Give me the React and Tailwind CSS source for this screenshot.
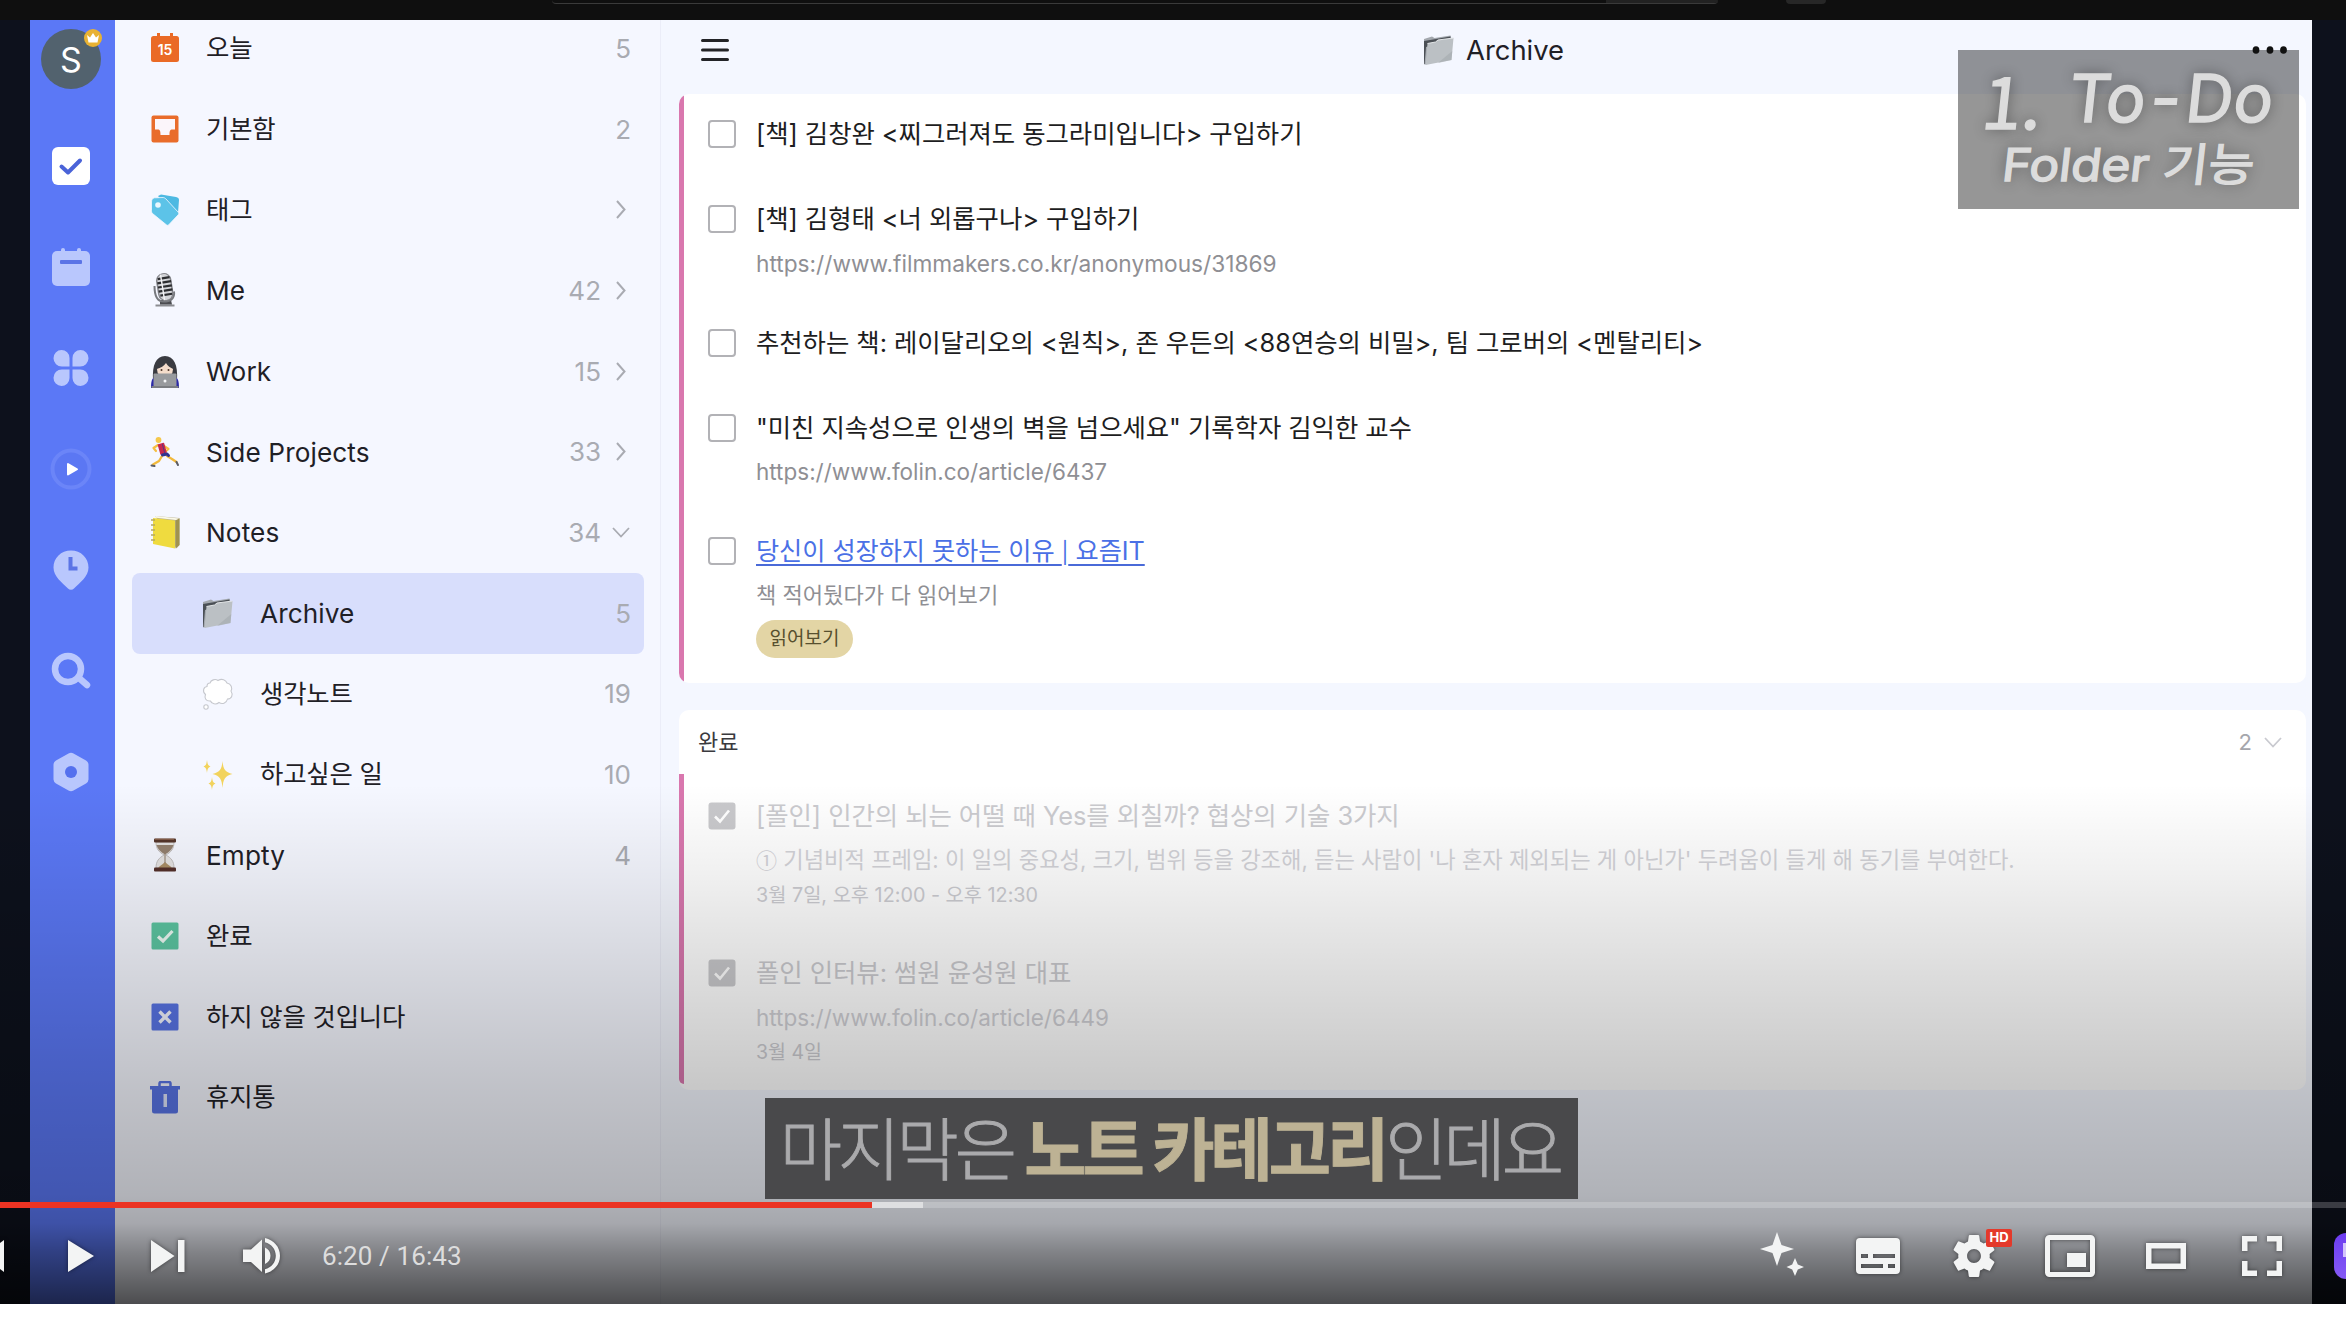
import React from "react";

const KR = "font-[Inter,'Noto_Sans_CJK_KR',sans-serif]";

/* ---------- rail icons ---------- */
const railIcons = [
  <svg key="c" width="38" height="38" viewBox="0 0 38 38"><rect width="38" height="38" rx="6" fill="#fff" /><path d="M9.500 19.500l6.500 6 12-12" fill="none" stroke="#4a63d8" strokeWidth="4" strokeLinecap="round" strokeLinejoin="round" /></svg>,
  <svg key="d" width="38" height="38" viewBox="0 0 38 38"><rect y="3" width="38" height="35" rx="5" fill="#b9c7fd" /><rect x="9" y="0" width="4" height="8" rx="2" fill="#b9c7fd" /><rect x="25" y="0" width="4" height="8" rx="2" fill="#b9c7fd" /><rect x="8" y="12" width="22" height="4" rx="1" fill="#5b74e6" /></svg>,
  <svg key="e" width="38" height="38" viewBox="0 0 38 38" fill="#b9c7fd"><path d="M17.500 17.500H10a8.300 8.300 0 0 1-8.500-8.300A8 8 0 0 1 9.500 1a8 8 0 0 1 8 8zM20.500 17.500h7.500a8.300 8.300 0 0 0 8.500-8.300A8 8 0 0 0 28.500 1a8 8 0 0 0-8 8zM17.500 20.500H10a8.300 8.300 0 0 0-8.500 8.300 8 8 0 0 0 8 8.200 8 8 0 0 0 8-8zM20.500 20.500h7.500a8.300 8.300 0 0 1 8.500 8.300 8 8 0 0 1-8 8.200 8 8 0 0 1-8-8z" /></svg>,
  <svg key="f" width="42" height="42" viewBox="0 0 42 42"><circle cx="21" cy="21" r="18.500" fill="#5b77f3" stroke="#6b85f8" strokeWidth="4" /><path d="M18 16v10.500l9-5.250z" fill="#fff" stroke="#fff" strokeWidth="2" strokeLinejoin="round" /></svg>,
  <svg key="g" width="38" height="40" viewBox="0 0 38 40"><path d="M19 0.500C9 0.500 1.500 8 1.500 17.500c0 9 8.500 15 14.500 21a4 4 0 0 0 6 0c6-6 14.500-12 14.500-21C36.500 8 29 .5 19 .5z" fill="#b9c7fd" /><path d="M18.500 7v11.500h7" fill="none" stroke="#5b74e6" strokeWidth="4" /></svg>,
  <svg key="h" width="40" height="38" viewBox="0 0 40 38" fill="none" stroke="#b9c7fd"><circle cx="17" cy="17" r="13" strokeWidth="6.500" /><path d="M28 26l8 7" strokeWidth="6.500" strokeLinecap="round" /></svg>,
  <svg key="i" width="38" height="40" viewBox="0 0 38 40"><path d="M16.500 1.500a5 5 0 0 1 5 0L34 8.500a5 5 0 0 1 2.500 4v15a5 5 0 0 1-2.500 4l-12.500 7a5 5 0 0 1-5 0L4 31.500a5 5 0 0 1-2.500-4v-15a5 5 0 0 1 2.500-4z" fill="#b9c7fd" /><circle cx="19" cy="20" r="6" fill="#5470ee" /></svg>,
];

/* ---------- list icons ---------- */
const Today = () => (
  <svg width="30" height="30" viewBox="0 0 30 30"><rect x="1" y="3" width="28" height="26" rx="2.500" fill="#ea6a26" /><rect x="7" y="0" width="3" height="5" fill="#ea6a26" /><rect x="20" y="0" width="3" height="5" fill="#ea6a26" /><text x="15" y="21.500" textAnchor="middle" fontSize="14" fontWeight="600" fill="#fff" className="font-[Inter,sans-serif]">15</text></svg>
);
const Inbox = () => (
  <svg width="28" height="28" viewBox="0 0 28 28"><rect x=".5" y=".5" width="27" height="27" rx="2" fill="#e96c2b" /><path d="M4 4h20v10.500h-3.500c-1.500.5-2 1.500-2 5.500h-9c0-4-.5-5-2-5.500H4z" fill="#fbf5fa" /></svg>
);
const Tag = () => (
  <svg width="30" height="32" viewBox="0 0 30 32"><path d="M8 2l3-1.500 15 2.500c2 .3 3 1.500 3 3l-1 13-3 3z" fill="#4db9e2" /><path d="M1.500 8c0-2 1-4 3-4.200L13 3.500c1 0 2 .5 3 1.500l12 13c1 1 1 2 0 3l-9 9.500c-1 1.200-2 1-3 0L2.500 19.500c-1-1-1-2-1-3z" fill="#5cc3e8" stroke="#f5f8ff" strokeWidth=".8" /><circle cx="8" cy="11" r="2.800" fill="#e9f8ff" /></svg>
);
const Mic = () => (
  <svg width="26" height="34" viewBox="0 0 26 34"><path d="M3.500 31.500h19v2h-19z" fill="#8b8c91" /><path d="M8 27h11l1 4.500H8z" fill="#4b4c50" /><path d="M2.500 13c0 10 3 15.500 9 15.500 7 0 11.500-3 10.500-10" fill="none" stroke="#77797e" strokeWidth="2" /><g transform="rotate(-9 13 14)"><rect x="5" y="0" width="15.500" height="28" rx="7.500" fill="#85868b" /><rect x="6.500" y="1" width="12.500" height="26" rx="6" fill="#d3d4d8" /><path d="M7 5h12M6 9.200h14M6 13.400h14M6 17.600h14M7 21.800h12" stroke="#2c2d30" strokeWidth="2.200" /><path d="M10.500 1v26" stroke="#f4f4f6" strokeWidth="1.400" /></g></svg>
);
const Woman = () => (
  <svg width="30" height="33" viewBox="0 0 30 33"><path d="M3 25C2 10 6 1 15 1s13 9 12 24z" fill="#3a3b41" /><path d="M1 33c0-7 1-10 4-11h20c3 1 4 4 4 11z" fill="#2c2aa6" /><ellipse cx="15" cy="14.500" rx="8" ry="8" fill="#f4dccb" /><path d="M6.500 14c.5-7 5-9 9-10 4 2 7.500 5 8 10-3-1-6-3-7.500-6-2 3-5 5-9.500 6z" fill="#3a3b41" /><circle cx="11.500" cy="15" r="1" fill="#4a3328" /><circle cx="18.500" cy="15" r="1" fill="#4a3328" /><rect x="3.500" y="18.500" width="23" height="13" rx="1" fill="#989a9e" /><rect x="1.500" y="31" width="27" height="2" fill="#7b7d82" /><circle cx="15" cy="26" r="1.500" fill="#f4f5f7" /></svg>
);
const Runner = () => (
  <svg width="30" height="32" viewBox="0 0 30 32" fill="none" strokeLinecap="round" strokeLinejoin="round"><path d="M8 9l-4.500 3L6 15M14 10l4.500 3-3 2.500" stroke="#f6bf42" strokeWidth="2.200" /><path d="M12 20l-3 5-6 3.500M17 20l5 3 4.500 3" stroke="#f2b93c" strokeWidth="2.300" /><path d="M1.500 29.500l3 .5M26.500 26l1.500 3" stroke="#5b5d66" strokeWidth="2" /><path d="M8.500 9l5-1.500 2.500 9-5 1.500z" fill="#c8284f" stroke="#c8284f" strokeWidth="1.500" /><path d="M12.500 8.500l2 8" stroke="#553a7f" strokeWidth="1" /><path d="M12.500 19l4.500-1 1.500 1.500" stroke="#2f3490" strokeWidth="3" /><circle cx="8.500" cy="4" r="2.900" fill="#f5c84c" /></svg>
);
const Notebook = () => (
  <svg width="30" height="34" viewBox="0 0 30 34"><path d="M5 1L29.500 3v27l-3 3.500z" fill="#b9b294" /><path d="M3 3L25 5.500v28L3 29z" fill="#efdb3f" /><path d="M25.500 5.500v28l4-3.500V3.500z" fill="#a0934f" /><path d="M4 2.500L26 5l3-1.500L6 1z" fill="#fbf9e8" /><path d="M1 5h4M1 10h4M1 15h4M1 20h4M1 25h4" stroke="#b3a867" strokeWidth="1.700" /></svg>
);
const Folder = () => (
  <svg width="32" height="31" viewBox="0 0 32 31"><path d="M1 4l8-2.500 2.500 1.500L27.500.5l.8 3L3 29.500 1 29z" fill="#a3a8ae" /><path d="M1 6l9-1.500L27.500 1.500v4L3 12 1.500 29.500 1 29z" fill="#4b5056" /><path d="M4.500 8.500l8-1.500 2.500-2 15.500-2-2 22L2.500 30z" fill="#bbc0c4" /><path d="M4.500 8.500l8-1.500 2.500-2 15.500-2" fill="none" stroke="#e3e6e8" strokeWidth="1" /><path d="M15 28l13.500-3 .8-9z" fill="#a0a6aa" opacity=".5" /></svg>
);
const Thought = () => (
  <svg width="32" height="34" viewBox="0 0 32 34"><g fill="#fff" stroke="#c6c8ce" strokeWidth="1.100"><path d="M8 6c1-3 5-4.500 8-2.500 4-2.500 8-.5 9 2.500 4.500 1 5.500 5 4 8 2.500 4 .5 8-3.500 8-1 4.500-5.500 5.500-8.500 3.500-3 2.500-7.500 1.500-8.500-1.500-4.500.5-6.500-3-5-6.500-3.500-3-2-7.500 1.500-8 0-2 1-3.500 3-3.500z" /><circle cx="4" cy="30" r="2.200" /></g></svg>
);
const Sparkle = () => (
  <svg width="30" height="32" viewBox="0 0 30 32" fill="#f2d35d"><path d="M19.500 2c.8 8 2.200 11 10 13-7.800 2-9.200 5-10 14-.8-9-2.200-12-10-14 7.800-2 9.200-5 10-13z" /><path d="M4 1c.5 4 1 5.500 3.500 6.500C5 8.500 4.500 10 4 14c-.5-4-1-5.500-3.500-6.500C3 6.500 3.500 5 4 1zM9 18c.5 4 1 5.500 3.500 6.500C10 25.500 9.500 27 9 31c-.5-4-1-5.500-3.500-6.500C8 23.500 8.500 22 9 18z" /></svg>
);
const Hourglass = () => (
  <svg width="24" height="34" viewBox="0 0 24 34"><path d="M3 4h18c0 7-3 10-8 13 5 3 8 6 8 13H3c0-7 3-10 8-13C6 14 3 11 3 4z" fill="#e4e2e2" stroke="#b5b1b0" strokeWidth=".8" /><path d="M3.500 7h17c-1 4-4 7-8.500 9.500C7.500 14 4.500 11 3.500 7z" fill="#93806f" /><path d="M5 30.500c1-2.500 4-3.500 7-6.500 3 3 6 4 7 6.500z" fill="#a98e66" /><path d="M12 16v9" stroke="#8c7a68" strokeWidth="1" /><rect x="1" y=".5" width="22" height="4" rx="1" fill="#54352a" /><rect x="1" y="29.500" width="22" height="4" rx="1" fill="#54302a" /><path d="M2 1.200h19" stroke="#a8795f" strokeWidth=".8" /></svg>
);
const Done = () => (
  <svg width="28" height="28" viewBox="0 0 28 28"><rect x=".5" y=".5" width="27" height="27" rx="1.500" fill="#5cc6a2" /><path d="M7 14.500l5 4.500 9.500-10" fill="none" stroke="#edfbf5" strokeWidth="3.200" /></svg>
);
const Wont = () => (
  <svg width="28" height="28" viewBox="0 0 28 28"><rect x=".5" y=".5" width="27" height="27" rx="1.500" fill="#5874e6" /><path d="M8.500 8.500l11 11M19.500 8.500l-11 11" fill="none" stroke="#f3f6ff" strokeWidth="3.400" /></svg>
);
const Trash = () => (
  <svg width="30" height="33" viewBox="0 0 30 33"><path d="M9.500 6V2.500a1.500 1.500 0 0 1 1.500-1.500h8a1.500 1.500 0 0 1 1.500 1.500V6" fill="none" stroke="#5874e6" strokeWidth="2.500" /><rect x="0" y="5" width="30" height="3.500" fill="#5874e6" /><path d="M2 7h26v23a2.500 2.500 0 0 1-2.500 2.500h-21A2.500 2.500 0 0 1 2 30z" fill="#5874e6" /><rect x="13.500" y="13" width="3.500" height="13" fill="#dfe5fb" /></svg>
);

const ChevR = () => (
  <svg width="10" height="19" viewBox="0 0 10 19" fill="none" stroke="#a9abb2" strokeWidth="2"><path d="M1 1l7.500 8.500L1 18" /></svg>
);
const ChevD = ({ c = "#a9abb2" }) => (
  <svg width="18" height="11" viewBox="0 0 18 11" fill="none" stroke={c} strokeWidth="1.800"><path d="M1 1l8 8.500L17 1" /></svg>
);

const rows = [
  { icon: <Today />, label: "오늘", n: "5" },
  { icon: <Inbox />, label: "기본함", n: "2" },
  { icon: <Tag />, label: "태그", chev: "r" },
  { icon: <Mic />, label: "Me", n: "42", chev: "r", latin: true },
  { icon: <Woman />, label: "Work", n: "15", chev: "r", latin: true },
  { icon: <Runner />, label: "Side Projects", n: "33", chev: "r", latin: true },
  { icon: <Notebook />, label: "Notes", n: "34", chev: "d", latin: true },
  { icon: <Folder />, label: "Archive", n: "5", sub: true, active: true, latin: true },
  { icon: <Thought />, label: "생각노트", n: "19", sub: true },
  { icon: <Sparkle />, label: "하고싶은 일", n: "10", sub: true },
  { icon: <Hourglass />, label: "Empty", n: "4", latin: true },
  { icon: <Done />, label: "완료" },
  { icon: <Wont />, label: "하지 않을 것입니다" },
  { icon: <Trash />, label: "휴지통" },
];

function Row({ icon, label, n, chev, sub, active, latin }) {
  return (
    <div className={`flex h-[80.7px] items-center rounded-lg pr-[13px] ${sub ? "pl-[70px]" : "pl-[17px]"} ${active ? "bg-[#d8defc]" : ""}`}>
      <div className="flex w-8 shrink-0 justify-center">{icon}</div>
      <div className={`${sub ? "ml-[26px]" : "ml-[25px]"} flex-1 whitespace-nowrap text-[#1f2026] ${latin ? "pt-px text-[26.200px] tracking-[0.1px]" : "text-[25.400px] tracking-[-0.2px]"}`}>{label}</div>
      <div className="text-[26px] text-[#a9abb2]">{n}</div>
      {chev && <div className="ml-[10px] flex w-5 justify-center">{chev === "r" ? <ChevR /> : <ChevD />}</div>}
    </div>
  );
}

function Box({ done }) {
  return done ? (
    <svg width="28" height="28" viewBox="0 0 28 28" className="shrink-0"><rect x=".5" y=".5" width="27" height="27" rx="3" fill="#c9c9cc" /><path d="M7 14.500l5 5 9-11" fill="none" stroke="#fff" strokeWidth="2.600" /></svg>
  ) : (
    <div className="size-7 shrink-0 rounded border-2 border-[#b2b2b6]" />
  );
}

function Task({ done, title, h, children }) {
  return (
    <div className={`flex ${h}`}>
      <div className="flex h-10 items-center"><Box done={done} /></div>
      <div className="ml-[20px] whitespace-nowrap">
        <div className={`h-10 text-[25.400px] leading-10 tracking-[-0.05px] ${done ? "text-[#cbcbcf]" : "text-[#1d1d21]"}`}>{title}</div>
        {children}
      </div>
    </div>
  );
}

const ctl = "drop-shadow-[0_0_2px_rgba(0,0,0,0.5)]";

export default function App() {
  return (
    <div className={`flex h-[1330px] w-[2346px] flex-col overflow-hidden bg-white ${KR}`}>
      <div className="flex h-5 shrink-0 items-start bg-[#0f0f0f] pl-[552px]">
        <div className="flex h-[4px] w-[1166px] overflow-hidden rounded-b-[10px] border-b border-[#3a3a3a]">
          <div className="ml-auto w-[112px] bg-[#222]" />
        </div>
        <div className="ml-[68px] h-1 w-[40px] rounded-b-full bg-[#272727]" />
      </div>

      <div className="relative flex h-[1284px] shrink-0 overflow-hidden bg-[#0d111c]">
        <div className="w-[30px] shrink-0" />
        {/* rail */}
        <div className="flex w-[85px] shrink-0 flex-col items-center bg-[#5b78f6] pr-[3px] pt-[9px]">
          <div className="relative flex size-[60px] shrink-0 items-center justify-center rounded-full bg-[#52626e] text-[34px] text-white">
            S
            <span className="absolute -right-px top-0 flex size-[18px] items-center justify-center rounded-full bg-[#e9b233]">
              <svg width="12" height="10" viewBox="0 0 12 10" fill="#fff"><path d="M0 2l3 2.500L6 0l3 4.500L12 2l-1.500 7.500h-9z" /></svg>
            </span>
          </div>
          <div className="mt-[26px] flex flex-col">
            {railIcons.map((ic, i) => (
              <div key={i} className="flex h-[101px] items-center justify-center">{ic}</div>
            ))}
          </div>
        </div>
        {/* list sidebar */}
        <div className="w-[546px] shrink-0 border-r border-[#ebedf8] bg-[#f5f7ff] pl-[17px] pr-[16px]">
          <div className="-mt-[12px]">
            {rows.map((r) => <Row key={r.label} {...r} />)}
          </div>
        </div>
        {/* content */}
        <div className="flex flex-1 flex-col bg-[#f4f7ff] pl-[18px] pr-[6px]">
          <div className="flex h-[74px] shrink-0 items-center pb-[13px]">
            <svg width="28" height="24" viewBox="0 0 28 24" stroke="#222327" strokeWidth="3" strokeLinecap="round" className="-mt-px ml-[22px]"><path d="M1.500 2.500h25M1.500 12h25M1.500 21.500h25" /></svg>
            <div className="ml-[694px] flex items-center gap-[11px] pt-px text-[27.400px] text-[#1f2026]"><Folder />Archive</div>
          </div>
          <div className="flex h-[589px] shrink-0 overflow-hidden rounded-[10px] bg-white">
            <div className="w-[5px] bg-[#d977ae]" />
            <div className="flex flex-col pl-[24px] pt-[20px]">
              <Task h="h-[85px]" title="[책] 김창완 <찌그러져도 동그라미입니다> 구입하기" />
              <Task h="h-[124px]" title="[책] 김형태 <너 외롭구나> 구입하기">
                <div className="mt-[9px] text-[22.700px] leading-8 text-[#8f8f94]">https://www.filmmakers.co.kr/anonymous/31869</div>
              </Task>
              <Task h="h-[85px]" title="추천하는 책: 레이달리오의 <원칙>, 존 우든의 <88연승의 비밀>, 팀 그로버의 <멘탈리티>" />
              <Task h="h-[123px]" title={'"미친 지속성으로 인생의 벽을 넘으세요" 기록학자 김익한 교수'}>
                <div className="mt-[8px] text-[22.500px] leading-8 text-[#8f8f94]">https://www.folin.co/article/6437</div>
              </Task>
              <Task h="h-[130px]" title={<span className="text-[25.200px] text-[#4a70e6] underline decoration-[#4a6ad8] decoration-2 underline-offset-[4px]">당신이 성장하지 못하는 이유 <span className="text-[21px]">|</span> 요즘IT</span>}>
                <div className="mt-[8px] text-[22.100px] leading-8 text-[#8f8f94]">책 적어뒀다가 다 읽어보기</div>
                <div className="mt-[9px] flex h-[38px] w-[97px] items-center justify-center rounded-full bg-[#e3d5a5] pt-px text-[19px] text-[#57502f]">읽어보기</div>
              </Task>
            </div>
          </div>
          <div className="mt-[27px] flex h-[380px] shrink-0 flex-col overflow-hidden rounded-[10px] bg-white">
            <div className="flex h-[64px] shrink-0 items-center pl-[19px] pr-[24px] text-[22px] text-[#3a3a3e]">
              완료
              <span className="ml-auto mr-[12px] text-[#a5a6ac]">2</span>
              <ChevD c="#c9cad0" />
            </div>
            <div className="flex flex-1">
              <div className="mb-[6px] w-[5px] rounded-bl-[5px] bg-[#d977ae]" />
              <div className="flex flex-col pl-[24px] pt-[22px]">
                <Task done h="h-[157px]" title="[폴인] 인간의 뇌는 어떨 때 Yes를 외칠까? 협상의 기술 3가지">
                  <div className="mt-[8px] h-8 text-[22.200px] leading-[30px] text-[#d3d3d8]"><span className="font-['Noto_Sans_CJK_KR',sans-serif] text-[21px]">①</span> 기념비적 프레임: 이 일의 중요성, 크기, 범위 등을 강조해, 듣는 사람이 '나 혼자 제외되는 게 아닌가' 두려움이 들게 해 동기를 부여한다.</div>
                  <div className="mt-[3px] text-[19.800px] leading-8 text-[#cdcdd2]">3월 7일, 오후 12:00 - 오후 12:30</div>
                </Task>
                <Task done h="h-[120px]" title="폴인 인터뷰: 썸원 윤성원 대표">
                  <div className="mt-[9px] text-[22.500px] leading-8 text-[#d0d0d5]">https://www.folin.co/article/6449</div>
                  <div className="mt-[2px] text-[19.500px] leading-8 text-[#cdcdd2]">3월 4일</div>
                </Task>
              </div>
            </div>
          </div>
        </div>
        <div className="w-[34px] shrink-0" />

        {/* chapter caption */}
        <div className="absolute left-[1958px] top-[30px] flex h-[159px] w-[341px] flex-col items-center bg-black/41 font-['Noto_Sans_CJK_KR',sans-serif] text-[#dcdcdc] [text-shadow:0_0_14px_rgba(0,0,0,0.45)] [-webkit-text-stroke:1.5px_#dcdcdc]">
          <div className="mt-[10px] flex h-[76px] -skew-x-6 items-center whitespace-pre text-[66px] leading-[70px]">
            <span className="text-[72px]">1.</span>
            <span className="ml-[26px] font-[Inter,sans-serif]">To</span>
            <span className="mx-[5px] inline-block font-[Inter,sans-serif]">-</span>
            <span className="font-[Inter,sans-serif]">Do</span>
          </div>
          <div className="-mt-[3px] -skew-x-6 scale-x-110 whitespace-pre font-[Inter,'Noto_Sans_CJK_KR',sans-serif] text-[45px] leading-[64px]">Folder 기능</div>
        </div>
        <svg width="36" height="8" viewBox="0 0 36 8" className="absolute left-[2252px] top-[26px]" fill="#111"><ellipse cx="4" cy="4" rx="3.400" ry="3.800" /><ellipse cx="18" cy="4" rx="3.400" ry="3.800" /><ellipse cx="31.500" cy="4" rx="3.400" ry="3.800" /></svg>

        {/* bottom shade */}
        <div className="absolute inset-x-0 bottom-0 h-[520px] bg-[linear-gradient(180deg,rgba(0,0,0,0)_0%,rgba(0,0,0,0.055)_16%,rgba(0,0,0,0.12)_33%,rgba(0,0,0,0.215)_58%,rgba(0,0,0,0.28)_79%,rgba(0,0,0,0.32)_84.500%,rgba(0,0,0,0.47)_90%,rgba(0,0,0,0.69)_100%)]" />

        {/* subtitle */}
        <div className="absolute left-[765px] top-[1078px] flex h-[101px] w-[813px] items-center justify-center whitespace-pre bg-[#49494b] pb-[6px] pr-[3px] font-['Noto_Sans_CJK_KR',sans-serif] text-[67.700px] font-light tracking-[-4px] text-[#aaaaac] [-webkit-text-stroke:0.9px_currentColor]">
          마지막은<span className="font-bold text-[#bdb294]"> 노트 카테고리</span>인데요
        </div>

        {/* player bar */}
        <div className="absolute inset-x-0 bottom-0 h-[102px]">
          <div className="flex h-[6px] bg-white/20">
            <div className="w-[872px] bg-[#eb3323]" />
            <div className="w-[51px] bg-white/50" />
          </div>
          <div className="flex h-24 items-center text-[#f3f4f4]">
            <svg width="4" height="32" viewBox="0 0 4 32" fill="currentColor" className={ctl}><path d="M4 0v32L0 29V3z" /></svg>
            <svg width="26" height="32" viewBox="0 0 26 32" fill="currentColor" className={`ml-[64px] ${ctl}`}><path d="M0 0v32l26-16z" /></svg>
            <svg width="34" height="32" viewBox="0 0 34 32" fill="currentColor" className={`ml-[57px] ${ctl}`}><path d="M0 0v32l23.500-16zM27 0h6.500v32H27z" /></svg>
            <svg width="38" height="36" viewBox="0 0 38 36" fill="currentColor" className={`ml-[58px] ${ctl}`}><path d="M0 11.500v12.500h8l11 10V1.500l-11 10zM22 9.500v16.500c3.500-1.500 5.500-4.500 5.500-8.250s-2-6.750-5.500-8.250zM22 0v4.300c6.500 1.800 10.800 7 10.800 13.500S28.500 29.500 22 31.300v4.200c9-2 15-9 15-17.700S31 2 22 0z" /></svg>
            <div className="ml-[41px] font-[Roboto,sans-serif] text-[26px] tracking-[0.1px] text-[#dddddd]">6:20 / 16:43</div>
            <div className="ml-auto flex items-center">
              <svg width="44" height="44" viewBox="0 0 44 44" fill="currentColor" className="-mt-1"><path d="M17 0l4.500 13L34 17l-12.500 4L17 34l-4.500-13L0 17l12.500-4zM35 26l2.800 6.500L44 35l-6.200 2.500L35 44l-2.800-6.500L26.500 35l5.700-2.500z" /></svg>
              <svg width="44" height="36" viewBox="0 0 44 36" className={`ml-[52px] ${ctl}`}><path fillRule="evenodd" fill="currentColor" d="M4 0h36a4 4 0 0 1 4 4v28a4 4 0 0 1-4 4H4a4 4 0 0 1-4-4V4a4 4 0 0 1 4-4zM5 16v4h7v-4zM17 16v4h22v-4zM5 26v4h22v-4zM32 26v4h7v-4z" /></svg>
              <div className="relative ml-[53px]">
                <svg width="42" height="42" viewBox="2 2 20 20" fill="currentColor" className={ctl}><path d="M19.430 12.980c.04-.32.07-.64.07-.98s-.03-.66-.07-.98l2.110-1.650c.19-.15.24-.42.12-.64l-2-3.460c-.12-.22-.39-.3-.61-.22l-2.490 1c-.52-.4-1.080-.73-1.690-.98l-.38-2.650C14.460 2.180 14.250 2 14 2h-4c-.25 0-.46.18-.49.42l-.38 2.650c-.61.25-1.170.59-1.690.98l-2.490-1c-.23-.09-.49 0-.61.22l-2 3.460c-.13.22-.07.49.12.64l2.110 1.650c-.04.32-.07.65-.07.98s.03.66.07.98l-2.110 1.650c-.19.15-.24.42-.12.64l2 3.460c.12.22.39.3.61.22l2.490-1c.52.4 1.080.73 1.690.98l.38 2.650c.03.24.24.42.49.42h4c.25 0 .46-.18.49-.42l.38-2.650c.61-.25 1.170-.59 1.690-.98l2.490 1c.23.09.49 0 .61-.22l2-3.460c.12-.22.07-.49-.12-.64zM12 15.300c-1.820 0-3.300-1.480-3.300-3.300s1.480-3.300 3.300-3.300 3.300 1.480 3.300 3.300-1.480 3.300-3.300 3.300z" /></svg>
                <div className="absolute -right-[17px] -top-[6px] flex h-[18px] w-[26px] items-center justify-center rounded-[2px] bg-[#e4392b] text-[13px] font-bold text-white">HD</div>
              </div>
              <svg width="50" height="42" viewBox="0 0 50 42" className={`ml-[50px] ${ctl}`}><rect x="2.500" y="2.500" width="45" height="37" rx="2" fill="none" stroke="currentColor" strokeWidth="5" /><rect x="22" y="18" width="19" height="14" fill="currentColor" /></svg>
              <svg width="40" height="26" viewBox="0 0 40 26" className={`ml-[51px] ${ctl}`}><rect x="2.750" y="2.750" width="34.500" height="20.500" fill="none" stroke="currentColor" strokeWidth="5.500" /></svg>
              <svg width="40" height="40" viewBox="0 0 40 40" className={`ml-[56px] ${ctl}`} fill="none" stroke="currentColor" strokeWidth="5.500"><path d="M2.750 15V2.750H15M25 2.750h12.250V15M37.250 25v12.250H25M15 37.250H2.750V25" /></svg>
              <div className="ml-[52px] flex h-[46px] w-3 items-start overflow-hidden rounded-l-[14px] bg-gradient-to-b from-[#6d3cf0] to-[#8559f5]">
                <div className="ml-[9px] mt-[10px] h-[14px] w-3 bg-[#d3c4fb]" />
              </div>
            </div>
          </div>
        </div>
      </div>
    </div>
  );
}
